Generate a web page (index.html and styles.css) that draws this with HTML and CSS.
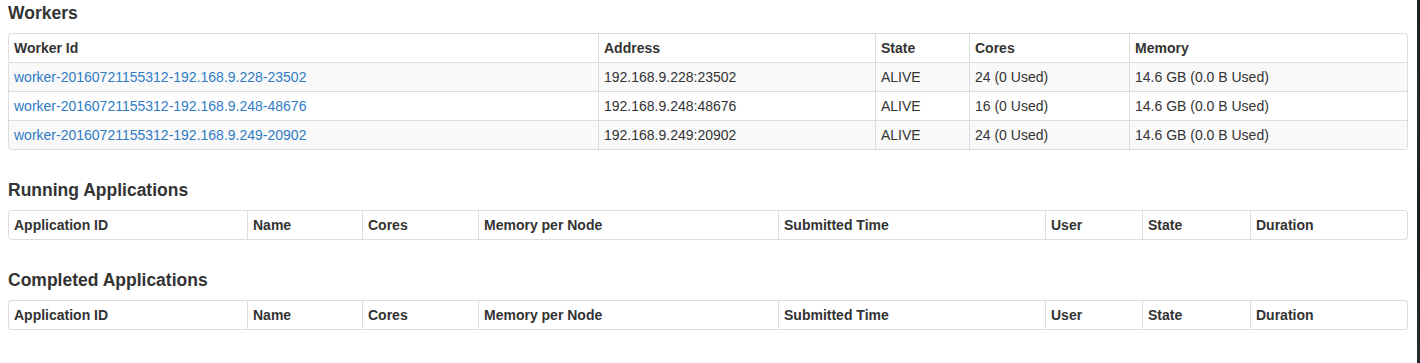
FILE: index.html
```html
<!DOCTYPE html>
<html>
<head>
<meta charset="utf-8">
<title>Spark Master</title>
<link rel="stylesheet" href="styles.css">
</head>
<body>
<div class="screen">
  <main class="page">
    <section class="section">
      <h4 class="title">Workers</h4>
      <table class="grid striped">
        <thead>
          <tr>
            <th class="w-id">Worker Id</th>
            <th class="w-addr">Address</th>
            <th class="w-state">State</th>
            <th class="w-cores">Cores</th>
            <th class="w-mem">Memory</th>
          </tr>
        </thead>
        <tbody>
          <tr>
            <td><a class="link" href="#">worker-20160721155312-192.168.9.228-23502</a></td>
            <td>192.168.9.228:23502</td>
            <td>ALIVE</td>
            <td>24 (0 Used)</td>
            <td>14.6 GB (0.0 B Used)</td>
          </tr>
          <tr>
            <td><a class="link" href="#">worker-20160721155312-192.168.9.248-48676</a></td>
            <td>192.168.9.248:48676</td>
            <td>ALIVE</td>
            <td>16 (0 Used)</td>
            <td>14.6 GB (0.0 B Used)</td>
          </tr>
          <tr>
            <td><a class="link" href="#">worker-20160721155312-192.168.9.249-20902</a></td>
            <td>192.168.9.249:20902</td>
            <td>ALIVE</td>
            <td>24 (0 Used)</td>
            <td>14.6 GB (0.0 B Used)</td>
          </tr>
        </tbody>
      </table>
    </section>

    <section class="section">
      <h4 class="title">Running Applications</h4>
      <table class="grid">
        <thead>
          <tr>
            <th class="a-id">Application ID</th>
            <th class="a-name">Name</th>
            <th class="a-cores">Cores</th>
            <th class="a-mem">Memory per Node</th>
            <th class="a-time">Submitted Time</th>
            <th class="a-user">User</th>
            <th class="a-state">State</th>
            <th class="a-dur">Duration</th>
          </tr>
        </thead>
        <tbody></tbody>
      </table>
    </section>

    <section class="section">
      <h4 class="title">Completed Applications</h4>
      <table class="grid">
        <thead>
          <tr>
            <th class="a-id">Application ID</th>
            <th class="a-name">Name</th>
            <th class="a-cores">Cores</th>
            <th class="a-mem">Memory per Node</th>
            <th class="a-time">Submitted Time</th>
            <th class="a-user">User</th>
            <th class="a-state">State</th>
            <th class="a-dur">Duration</th>
          </tr>
        </thead>
        <tbody></tbody>
      </table>
    </section>
  </main>
  <div class="edge"></div>
</div>
</body>
</html>
```

FILE: styles.css
```css
html, body {
  margin: 0;
  padding: 0;
  background: #ffffff;
}

body {
  font-family: "Liberation Sans", Helvetica, Arial, sans-serif;
  font-size: 14px;
  line-height: 20px;
  color: #333333;
}

.screen {
  display: flex;
  min-height: 363px;
}

.page {
  flex: 1;
  padding: 3px 9px 0 8px;
  min-width: 0;
}

.edge {
  width: 3px;
  flex: none;
  background: linear-gradient(180deg, #1d2124 0%, #23292c 30%, #1a1e22 60%, #252b2e 100%);
}

.section {
  margin-bottom: 30px;
}

.title {
  margin: 0 0 10px 0;
  font-size: 17.5px;
  line-height: 20px;
  font-weight: bold;
  color: #333333;
}

.grid {
  width: 1400px;
  table-layout: fixed;
  border-collapse: separate;
  border-spacing: 0;
  border: 1px solid #dddddd;
  border-left: 0;
  border-radius: 4px;
}

.grid th,
.grid td {
  box-sizing: border-box;
  padding: 4px 5px;
  line-height: 20px;
  text-align: left;
  vertical-align: top;
  border-left: 1px solid #dddddd;
  border-top: 1px solid #dddddd;
  white-space: nowrap;
}

.grid thead tr:first-child th {
  border-top: 0;
}

.grid th {
  font-weight: bold;
}

.grid thead tr:first-child th:first-child {
  border-top-left-radius: 4px;
}

.grid tr:last-child > :first-child {
  border-bottom-left-radius: 4px;
}

.striped tbody tr:nth-child(odd) td {
  background: #f9f9f9;
}

.link {
  color: #2f7bc4;
  text-decoration: none;
}

/* worker columns */
.w-id { width: 590px; }
.w-addr { width: 277px; }
.w-state { width: 94px; }
.w-cores { width: 160px; }
.w-mem { width: 278px; }

/* application columns */
.a-id { width: 239px; }
.a-name { width: 115px; }
.a-cores { width: 116px; }
.a-mem { width: 300px; }
.a-time { width: 267px; }
.a-user { width: 97px; }
.a-state { width: 108px; }
.a-dur { width: 157px; }
```
